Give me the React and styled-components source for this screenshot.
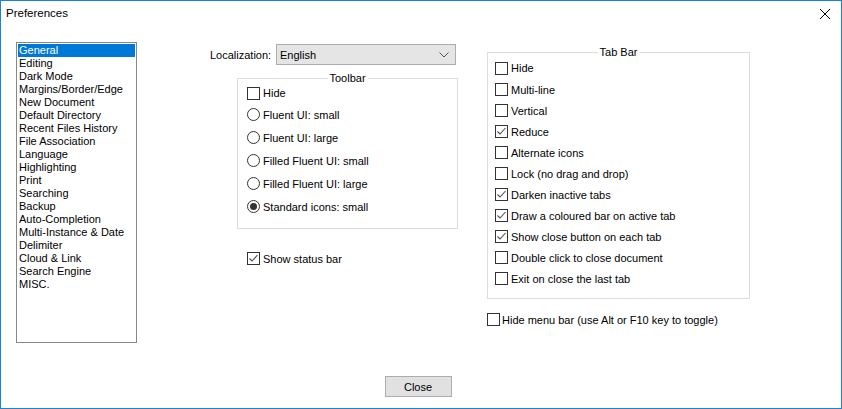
import React from "react";
import styled, { createGlobalStyle } from "styled-components";

const GlobalStyle = createGlobalStyle`
  html, body {
    margin: 0;
    padding: 0;
    background: #ffffff;
  }
  body {
    font-family: "Liberation Sans", Arial, sans-serif;
    font-size: 11px;
    color: #000;
  }
`;

const categories = [
  "General",
  "Editing",
  "Dark Mode",
  "Margins/Border/Edge",
  "New Document",
  "Default Directory",
  "Recent Files History",
  "File Association",
  "Language",
  "Highlighting",
  "Print",
  "Searching",
  "Backup",
  "Auto-Completion",
  "Multi-Instance & Date",
  "Delimiter",
  "Cloud & Link",
  "Search Engine",
  "MISC.",
];

const toolbarOptions = [
  { label: "Fluent UI: small", checked: false },
  { label: "Fluent UI: large", checked: false },
  { label: "Filled Fluent UI: small", checked: false },
  { label: "Filled Fluent UI: large", checked: false },
  { label: "Standard icons: small", checked: true },
];

const tabBarOptions = [
  { label: "Hide", checked: false },
  { label: "Multi-line", checked: false },
  { label: "Vertical", checked: false },
  { label: "Reduce", checked: true },
  { label: "Alternate icons", checked: false },
  { label: "Lock (no drag and drop)", checked: false },
  { label: "Darken inactive tabs", checked: true },
  { label: "Draw a coloured bar on active tab", checked: true },
  { label: "Show close button on each tab", checked: true },
  { label: "Double click to close document", checked: false },
  { label: "Exit on close the last tab", checked: false },
];

const CheckBox = ({ checked }) => (
  <Box>
    {checked && (
      <svg width="11" height="11" viewBox="0 0 11 11">
        <polyline
          points="1.5,5.5 4,8 9.5,2"
          fill="none"
          stroke="#4d4d4d"
          strokeWidth="1.1"
        />
      </svg>
    )}
  </Box>
);

const Check = ({ label, checked, first }) => (
  <CheckRow $first={first}>
    <CheckBox checked={checked} />
    <span>{label}</span>
  </CheckRow>
);

const Radio = ({ label, checked }) => (
  <RadioRow>
    <Circle>{checked && <Dot />}</Circle>
    <span>{label}</span>
  </RadioRow>
);

export default function App() {
  return (
    <>
      <GlobalStyle />
      <Window>
        <TitleBar>
          <Title>Preferences</Title>
          <CloseIcon width="12" height="12" viewBox="0 0 12 12">
            <line x1="1" y1="1" x2="11" y2="11" stroke="#000" strokeWidth="1" />
            <line x1="11" y1="1" x2="1" y2="11" stroke="#000" strokeWidth="1" />
          </CloseIcon>
        </TitleBar>

        <Main>
          <ListBox>
            {categories.map((c, i) => (
              <ListItem key={c} $selected={i === 0}>
                {c}
              </ListItem>
            ))}
          </ListBox>

          <MiddleColumn>
            <LocaleRow>
              <LocaleLabel>Localization:</LocaleLabel>
              <Combo>
                <span>English</span>
                <svg width="10" height="6" viewBox="0 0 10 6">
                  <polyline
                    points="0.5,0.5 5,5 9.5,0.5"
                    fill="none"
                    stroke="#555"
                    strokeWidth="1"
                  />
                </svg>
              </Combo>
            </LocaleRow>

            <ToolbarGroup>
              <Legend>Toolbar</Legend>
              <ToolbarHide>
                <CheckBox checked={false} />
                <span>Hide</span>
              </ToolbarHide>
              {toolbarOptions.map((o) => (
                <Radio key={o.label} label={o.label} checked={o.checked} />
              ))}
            </ToolbarGroup>

            <StatusRow>
              <CheckBox checked />
              <span>Show status bar</span>
            </StatusRow>
          </MiddleColumn>

          <RightColumn>
            <TabBarGroup>
              <Legend>Tab Bar</Legend>
              {tabBarOptions.map((o, i) => (
                <Check
                  key={o.label}
                  label={o.label}
                  checked={o.checked}
                  first={i === 0}
                />
              ))}
            </TabBarGroup>

            <MenuBarRow>
              <CheckBox checked={false} />
              <span>Hide menu bar (use Alt or F10 key to toggle)</span>
            </MenuBarRow>
          </RightColumn>
        </Main>

        <Footer>
          <Button>Close</Button>
        </Footer>
      </Window>
    </>
  );
}

const Window = styled.div`
  width: 842px;
  height: 409px;
  box-sizing: border-box;
  border: 1px solid #1883d7;
  background: #ffffff;
  display: flex;
  flex-direction: column;
  overflow: hidden;
`;

const TitleBar = styled.div`
  height: 25px;
  display: flex;
  align-items: center;
  justify-content: space-between;
  padding: 0 10px 0 5px;
  flex-shrink: 0;
`;

const Title = styled.div`
  font-size: 11.5px;
  line-height: 13px;
`;

const CloseIcon = styled.svg`
  display: block;
`;

const Main = styled.div`
  flex: 1;
  display: flex;
  align-items: flex-start;
  padding-left: 15px;
`;

const ListBox = styled.div`
  width: 121px;
  height: 301px;
  box-sizing: border-box;
  margin-top: 16px;
  border: 1px solid #828790;
  padding: 1px;
  display: flex;
  flex-direction: column;
`;

const ListItem = styled.div`
  height: 13px;
  line-height: 13px;
  padding-left: 1px;
  white-space: nowrap;
  background: ${(p) => (p.$selected ? "#0078d7" : "transparent")};
  color: ${(p) => (p.$selected ? "#ffffff" : "#000000")};
`;

const MiddleColumn = styled.div`
  width: 248px;
  margin-left: 73px;
  display: flex;
  flex-direction: column;
`;

const LocaleRow = styled.div`
  display: flex;
  align-items: center;
  margin-top: 18px;
  height: 21px;
`;

const LocaleLabel = styled.div`
  width: 66px;
  white-space: nowrap;
`;

const Combo = styled.div`
  width: 180px;
  height: 21px;
  box-sizing: border-box;
  border: 1px solid #adadad;
  background: #e5e5e5;
  display: flex;
  align-items: center;
  justify-content: space-between;
  padding: 0 6px 0 3px;
`;

const Group = styled.div`
  position: relative;
  box-sizing: border-box;
  border: 1px solid #dcdcdc;
  display: flex;
  flex-direction: column;
`;

const Legend = styled.span`
  position: absolute;
  top: -7px;
  left: 50%;
  transform: translateX(-50%);
  background: #ffffff;
  padding: 0 2px;
  line-height: 13px;
  white-space: nowrap;
`;

const ToolbarGroup = styled(Group)`
  width: 221px;
  height: 151px;
  margin: 13px 0 0 27px;
  padding: 4px 0 0 9px;
`;

const Row = styled.div`
  display: flex;
  align-items: center;
  gap: 3px;
  white-space: nowrap;
`;

const ToolbarHide = styled(Row)`
  height: 20px;
`;

const RadioRow = styled(Row)`
  height: 23px;
`;

const TabBarGroup = styled(Group)`
  width: 263px;
  height: 247px;
  margin-top: 26px;
  padding: 4px 0 0 7px;
`;

const CheckRow = styled(Row)`
  height: ${(p) => (p.$first ? "22px" : "21px")};
`;

const StatusRow = styled(Row)`
  margin: 23px 0 0 37px;
  height: 13px;
`;

const RightColumn = styled.div`
  margin-left: 29px;
  display: flex;
  flex-direction: column;
`;

const MenuBarRow = styled(Row)`
  margin-top: 14px;
  height: 13px;
  gap: 2px;
`;

const Box = styled.div`
  width: 13px;
  height: 13px;
  box-sizing: border-box;
  border: 1px solid #333333;
  background: #ffffff;
  display: flex;
  align-items: center;
  justify-content: center;
  flex-shrink: 0;
`;

const Circle = styled.div`
  width: 13px;
  height: 13px;
  box-sizing: border-box;
  border: 1px solid #333333;
  border-radius: 50%;
  background: #ffffff;
  display: flex;
  align-items: center;
  justify-content: center;
  flex-shrink: 0;
`;

const Dot = styled.div`
  width: 7px;
  height: 7px;
  border-radius: 50%;
  background: #333333;
`;

const Footer = styled.div`
  height: 32px;
  flex-shrink: 0;
  display: flex;
  justify-content: center;
  align-items: flex-start;
  padding-right: 6px;
`;

const Button = styled.div`
  width: 67px;
  height: 21px;
  box-sizing: border-box;
  border: 1px solid #adadad;
  background: #e1e1e1;
  display: flex;
  align-items: center;
  justify-content: center;
`;
